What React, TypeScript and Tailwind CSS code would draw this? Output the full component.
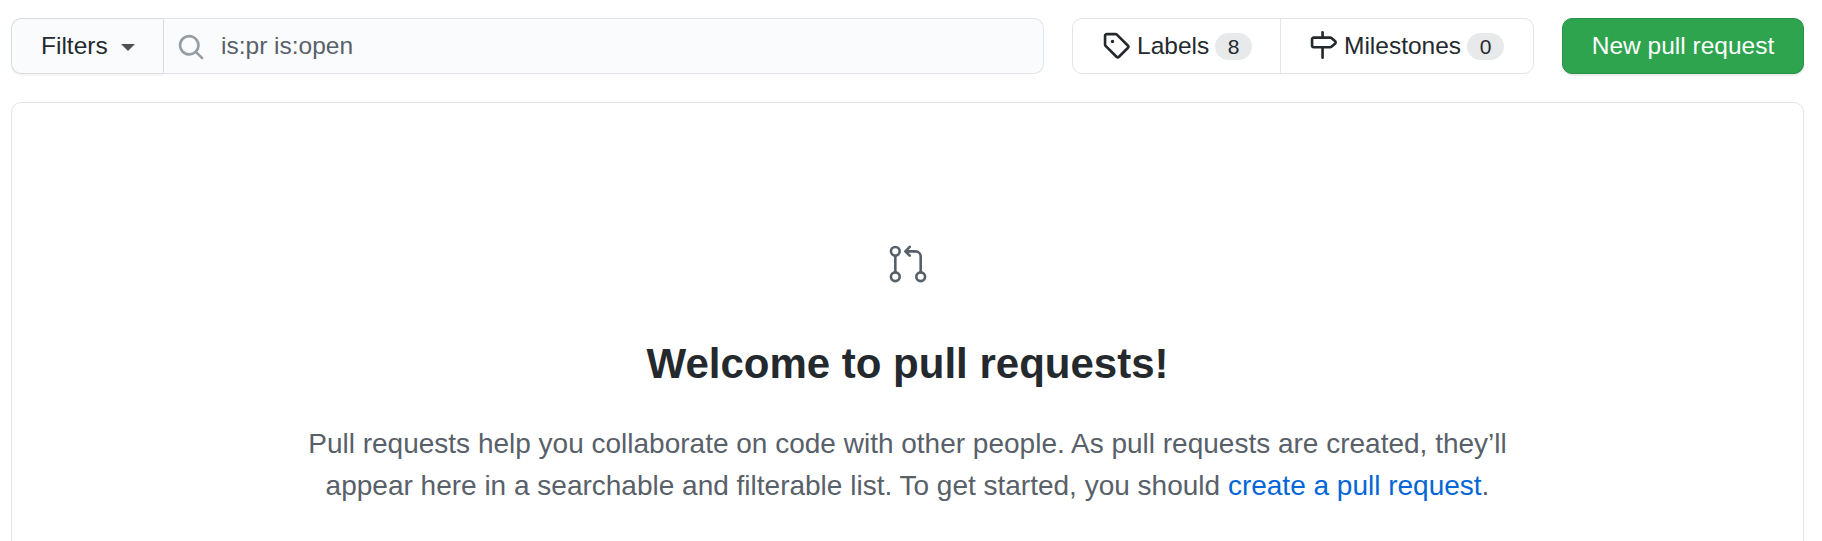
import type { ReactNode } from "react";

function Octicon({ d, className = "" }: { d: string; className?: string }) {
  return (
    <svg viewBox="0 0 16 16" className={`h-7 w-7 shrink-0 ${className}`} fill="currentColor" fillRule="evenodd" aria-hidden="true">
      <path d={d} />
    </svg>
  );
}

const SEARCH =
  "M11.5 7a4.499 4.499 0 11-8.998 0A4.499 4.499 0 0111.5 7zm-.82 4.74a6 6 0 111.06-1.06l3.04 3.04a.75.75 0 11-1.06 1.06l-3.04-3.04z";
const TAG =
  "M2.5 7.775V2.75a.25.25 0 01.25-.25h5.025a.25.25 0 01.177.073l6.25 6.25a.25.25 0 010 .354l-5.025 5.025a.25.25 0 01-.354 0l-6.25-6.25a.25.25 0 01-.073-.177zm-1.5 0V2.75C1 1.784 1.784 1 2.75 1h5.025c.464 0 .91.184 1.238.513l6.25 6.25a1.75 1.75 0 010 2.474l-5.026 5.026a1.75 1.75 0 01-2.474 0l-6.25-6.25A1.75 1.75 0 011 7.775zM6 5a1 1 0 100 2 1 1 0 000-2z";
const MILESTONE =
  "M7.75 0a.75.75 0 01.75.75V3h3.634c.414 0 .814.147 1.13.414l2.07 1.75a1.75 1.75 0 010 2.672l-2.07 1.75a1.75 1.75 0 01-1.13.414H8.5v5.25a.75.75 0 11-1.5 0V10H2.75A1.75 1.75 0 011 8.25v-3.5C1 3.784 1.784 3 2.75 3H7V.75A.75.75 0 017.75 0zm0 8.5h4.384a.25.25 0 00.161-.06l2.07-1.75a.25.25 0 000-.38l-2.07-1.75a.25.25 0 00-.161-.06H2.75a.25.25 0 00-.25.25v3.5c0 .138.112.25.25.25h5z";

function PullRequestIcon() {
  return (
    <svg viewBox="0 0 24 24" className="h-[42px] w-[42px]" fill="none" stroke="currentColor" strokeWidth="1.5" strokeLinecap="round" strokeLinejoin="round" aria-hidden="true">
      <circle cx="4.75" cy="4.75" r="2.5" />
      <circle cx="4.75" cy="19.25" r="2.5" />
      <circle cx="19.25" cy="19.25" r="2.5" />
      <path d="M4.75 7.25v9.5M19.25 16.75V7.75a3 3 0 00-3-3H10.8M13 2.25l-2.5 2.5 2.5 2.5" />
    </svg>
  );
}

function SubnavLink({ icon, label, count, className }: { icon: string; label: string; count: number; className: string }) {
  return (
    <a href="#" className={`flex items-center ${className}`}>
      <Octicon d={icon} className="mb-0.5" />
      <span className="mb-0.5 ml-[7px]">{label}</span>
      <Counter>{count}</Counter>
    </a>
  );
}

function Counter({ children }: { children: ReactNode }) {
  return (
    <span className="ml-1.5 flex h-[27px] w-[37px] items-center justify-center rounded-full bg-[#e8e9eb] text-[21px]">
      {children}
    </span>
  );
}

export default function App() {
  return (
    <main className="flex h-[541px] flex-col overflow-hidden bg-white pt-[18px] pr-[18px] pl-[11px] font-['Liberation_Sans',Arial,sans-serif] text-[24.5px] leading-[37px] text-[#24292e]">
      <div className="flex h-14 shrink-0">
        <div className="flex flex-1">
          <button className="flex w-[152px] items-center rounded-l-[10px] border border-r-0 border-[#d9dbde] bg-[#fafbfc] pl-[29px] shadow-[0_2px_0_rgba(27,31,35,0.04)]">
            <span className="mb-0.5">Filters</span>
            <span className="mt-[3px] ml-[13px] border-x-7 border-t-7 border-x-transparent border-t-[#4f5357]" />
          </button>
          <div className="flex flex-1 items-center rounded-r-[10px] border border-[#e1e4e8] border-l-[#d9dbde] bg-[#fafbfc] pl-[13px]">
            <Octicon d={SEARCH} className="mt-px text-[#959da5]" />
            <span className="mb-0.5 ml-4 text-[#586069]">is:pr is:open</span>
          </div>
        </div>
        <nav className="ml-7 flex w-[462px] rounded-[10px] border border-[#e1e4e8]">
          <SubnavLink icon={TAG} label="Labels" count={8} className="w-[207px] pl-[29px]" />
          <SubnavLink icon={MILESTONE} label="Milestones" count={0} className="flex-1 border-l border-[#e1e4e8] pl-7" />
        </nav>
        <button className="ml-7 w-[242px] rounded-[10px] border border-[#2a9148] bg-[#2ea44f] pb-0.5 text-white shadow-[0_2px_0_rgba(27,31,35,0.08)]">
          New pull request
        </button>
      </div>
      <section className="mt-7 flex h-[500px] shrink-0 flex-col items-center rounded-[10px] border border-[#e1e4e8] pt-[140px] text-center">
        <div className="text-[#586069]">
          <PullRequestIcon />
        </div>
        <h1 className="mt-[47px] text-[42px] leading-[63px] font-bold">Welcome to pull requests!</h1>
        <p className="mt-7 w-[1232px] text-[28px] leading-[42px] text-[#586069]">
          Pull requests help you collaborate on code with other people. As pull requests are created, they’ll appear here in a
          searchable and filterable list. To get started, you should{" "}
          <a href="#" className="text-[#0366d6]">create a pull request</a>.
        </p>
      </section>
    </main>
  );
}
